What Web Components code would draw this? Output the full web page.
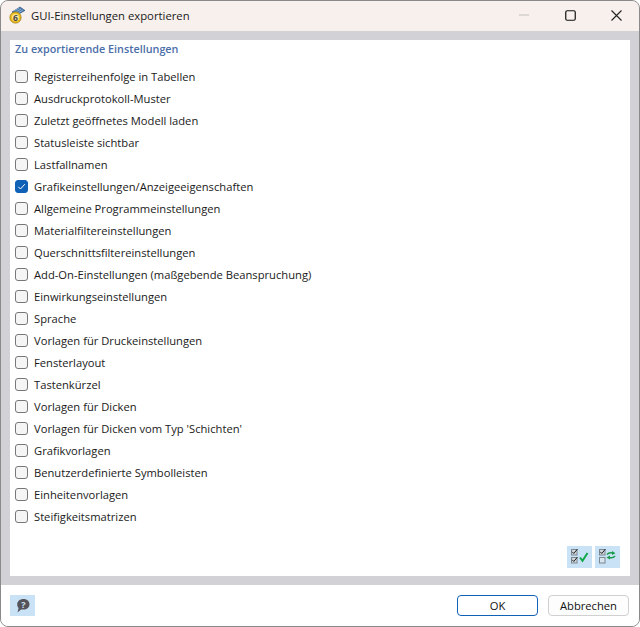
<!DOCTYPE html>
<html lang="de"><head><meta charset="utf-8"><style>
html,body{margin:0;padding:0;background:#fff;height:100%}
body{font:11.2px "Open Sans",sans-serif;color:#1a1a1a}
</style></head><body>
<gui-dialog title-text="GUI-Einstellungen exportieren">
<span slot="head">Zu exportierende Einstellungen</span>
<check-row>Registerreihenfolge in Tabellen</check-row>
<check-row>Ausdruckprotokoll-Muster</check-row>
<check-row>Zuletzt geöffnetes Modell laden</check-row>
<check-row>Statusleiste sichtbar</check-row>
<check-row>Lastfallnamen</check-row>
<check-row checked>Grafikeinstellungen/Anzeigeeigenschaften</check-row>
<check-row>Allgemeine Programmeinstellungen</check-row>
<check-row>Materialfiltereinstellungen</check-row>
<check-row>Querschnittsfiltereinstellungen</check-row>
<check-row>Add-On-Einstellungen (maßgebende Beanspruchung)</check-row>
<check-row>Einwirkungseinstellungen</check-row>
<check-row>Sprache</check-row>
<check-row>Vorlagen für Druckeinstellungen</check-row>
<check-row>Fensterlayout</check-row>
<check-row>Tastenkürzel</check-row>
<check-row>Vorlagen für Dicken</check-row>
<check-row>Vorlagen für Dicken vom Typ 'Schichten'</check-row>
<check-row>Grafikvorlagen</check-row>
<check-row>Benutzerdefinierte Symbolleisten</check-row>
<check-row>Einheitenvorlagen</check-row>
<check-row>Steifigkeitsmatrizen</check-row>
</gui-dialog>
<script>
const mini=(y,on)=>`<rect x="2.5" y="${y+.5}" width="5.500" height="5.500" fill="${on?'#cfd6dc':'#d6e4ee'}" stroke="#7d8790"/>`+(on?`<path d="M3.200 ${y+2.800}l1.600 1.700 3.600-4.400" fill="none" stroke="#222" stroke-width="1"/>`:'');
class CheckRow extends HTMLElement{connectedCallback(){
 const on=this.hasAttribute('checked');
 this.attachShadow({mode:'open'}).innerHTML=`<style>
 :host{display:flex;align-items:center;height:22px;gap:6px}
 .b{width:11px;height:11px;border-radius:3px;border:1px solid #77777a;background:#f5f5f5;display:block;flex:none}
 .b.on{background:#0f62b6;border-color:#0f62b6}
 svg{display:block}
 </style><span class="b ${on?'on':''}">${on?'<svg width="11" height="11" viewBox="0 0 11 11"><path d="M2.300 5.800l2.200 2.200L8.800 3.200" fill="none" stroke="#fff" stroke-width="1"/></svg>':''}</span><span><slot></slot></span>`;
}}
customElements.define('check-row',CheckRow);
class DlgButton extends HTMLElement{connectedCallback(){
 this.attachShadow({mode:'open'}).innerHTML=`<style>
 :host{display:flex;align-items:center;justify-content:center;width:79px;height:19px;border:1px solid #d0d0d0;border-radius:4px;background:#fdfdfd;font-size:11.2px;color:#111}
 :host([primary]){border-color:#0f62b6;background:#fff}
 </style><slot></slot>`;
}}
customElements.define('dlg-button',DlgButton);
class GuiDialog extends HTMLElement{connectedCallback(){
 const t=this.getAttribute('title-text');
 this.attachShadow({mode:'open'}).innerHTML=`<style>
 :host{display:flex;flex-direction:column;box-sizing:border-box;width:640px;height:627px;background:#d1d1d6;border:1px solid #8a8a8a;border-radius:8px;overflow:hidden}
 .title{height:30px;box-sizing:border-box;padding-bottom:2px;flex:none;background:#f7f0ec;display:flex;align-items:center;padding-left:7px;font-size:11.300px;color:#1a1a1a}
 .title .logo{margin-right:5px}
 .wc{margin-left:auto;display:flex}
 .wc span{width:46px;height:28px;display:flex;align-items:center;justify-content:center}
 .panel{flex:1;margin:9px;background:#fff;display:flex;flex-direction:column;padding:1px 5px 0 5px;min-height:0}
 .head{color:#4a6ea8;font-weight:600;font-size:10.800px;height:16px;line-height:15px;margin-bottom:8px}
 .list{display:flex;flex-direction:column;flex:1}
 .tools{display:flex;justify-content:flex-end;gap:3px;margin:0 5px 8px 0}
 .tool{width:25px;height:22px;background:#c9e2f6;display:flex;align-items:center;justify-content:center}
 .foot{flex:none;height:41px;background:#fff;display:flex;align-items:center;padding:0 10px 0 9px;gap:10px;box-sizing:border-box}
 .help{width:25px;height:21px;background:#c9e2f6;display:flex;align-items:center;justify-content:center;margin-right:auto}
 </style>
 <div class="title">
  <svg class="logo" width="18" height="18" viewBox="0 0 18 18"><path d="M4 6 L12 1 L17 4.500 L9 9Z" fill="#4a7bb0" stroke="#2c4a70" stroke-width=".6"/><path d="M6 5l5-3 M8 6l5-3 M10 7l5-3" stroke="#a8c4e0" stroke-width=".7"/><circle cx="7.500" cy="11.500" r="5.600" fill="#f0c020" stroke="#9a7a10" stroke-width=".8"/><circle cx="7.500" cy="11.500" r="3.400" fill="#fbe9a0"/><text x="7.500" y="14.500" text-anchor="middle" font-size="8.500" font-weight="700" font-family="Open Sans" fill="#444">6</text></svg>
  <span>${t}</span>
  <span class="wc">
   <span><svg width="10" height="10"><path d="M0 5h10" stroke="#c4c0be"/></svg></span>
   <span><svg width="11" height="11"><rect x=".75" y=".75" width="9.500" height="9.500" rx="1.500" fill="none" stroke="#111" stroke-width="1.200"/></svg></span>
   <span><svg width="11" height="11"><path d="M.5.5l10 10M10.500.5l-10 10" stroke="#222" stroke-width="1.100"/></svg></span>
  </span>
 </div>
 <div class="panel">
  <div class="head"><slot name="head"></slot></div>
  <div class="list"><slot></slot></div>
  <div class="tools">
   <span class="tool"><svg width="22" height="18" viewBox="0 0 22 18">${mini(1,1)}${mini(9,1)}<path d="M11 9.500l2.500 3.300L18.500 5" fill="none" stroke="#12a84a" stroke-width="2"/></svg></span>
   <span class="tool"><svg width="22" height="18" viewBox="0 0 22 18">${mini(1,1)}${mini(9,0)}<path d="M10 6.500c1.500-2 3.500-2.200 6-1.500" fill="none" stroke="#1a9a4a" stroke-width="1.500"/><path d="M18 8c-1.500 2-3.500 2.200-6 1.500" fill="none" stroke="#1a9a4a" stroke-width="1.500"/><path d="M15 3l3.500 2.200-3.500 1.800zM13 7.500l-3.500 2 3.500 2z" fill="#1a9a4a"/></svg></span>
  </div>
 </div>
 <div class="foot">
  <span class="help"><svg width="18" height="16" viewBox="0 0 18 16"><path d="M9.500 1C13 1 15.500 3.200 15.500 6.300S13 11.600 9.500 11.600H7L3.500 14.500 4.600 10C3.600 9 3.200 7.700 3.200 6.300 3.200 3.200 6 1 9.500 1Z" fill="#54545a"/><text x="9.500" y="10" text-anchor="middle" font-size="9" font-weight="700" font-family="Open Sans" fill="#cfe3f5">?</text></svg></span>
  <dlg-button primary>OK</dlg-button><dlg-button>Abbrechen</dlg-button>
 </div>`;
}}
customElements.define('gui-dialog',GuiDialog);
</script></body></html>
